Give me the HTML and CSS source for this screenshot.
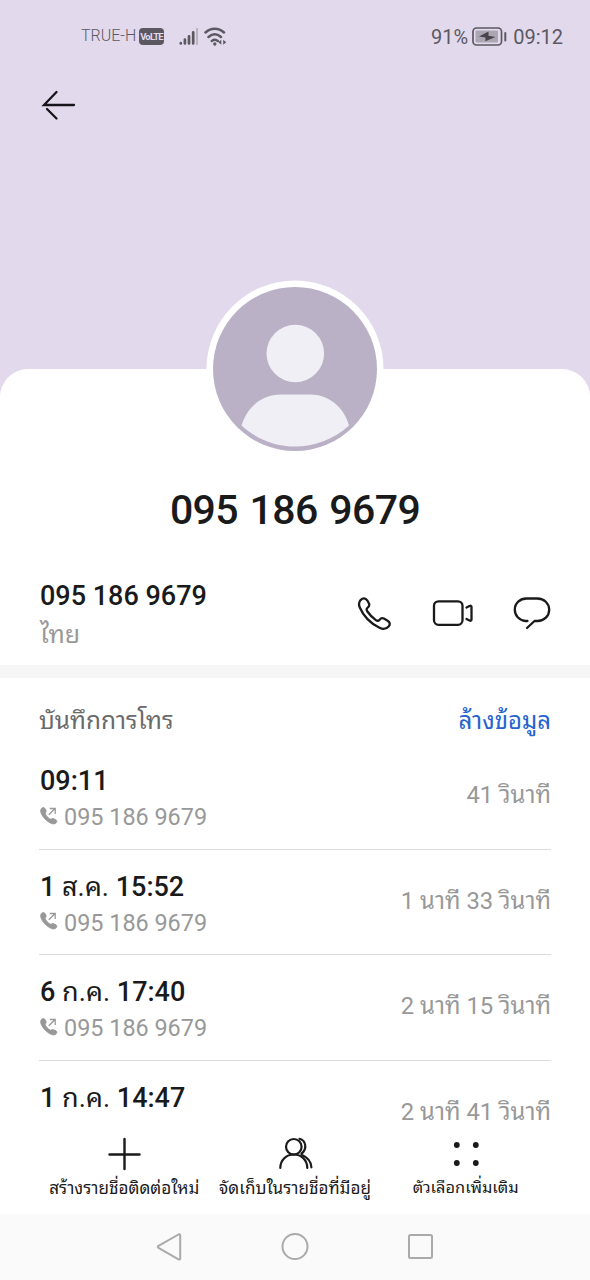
FILE: index.html
```html
<!DOCTYPE html>
<html lang="th">
<head>
<meta charset="utf-8">
<title>095 186 9679</title>
<link rel="stylesheet" href="styles.css">
</head>
<body>
<svg class="defs" width="0" height="0">
  <symbol id="outgoing" viewBox="0 0 18 18">
    <path d="M1.600 1.400C3-.1 4.300.2 5.300 2l.8 1.700c.5 1.200-.9 1.700-.9 2.700.4 2 3.100 4.900 5.300 5.800 1 .2 1.700-1.100 2.800-.6l2.600 1.200c1.300.7 1.200 2.100.1 3.100-1.200 1.100-2.900 1.300-4.500.6C6.600 14.300 2.500 10 1 5.700.5 4 .4 2.500 1.600 1.400z" fill="#989898" stroke="#989898" stroke-width=".9"/>
    <path d="M8.800 7.800 14.800 1.800M9.800 1.500h5.400v5.600" fill="none" stroke="#989898" stroke-width="1.300"/>
  </symbol>
</svg>
<div class="screen">
  <header class="hero">
    <div class="status">
      <div class="status-left">
        <span class="carrier">TRUE-H</span>
        <span class="volte">VoLTE</span>
        <svg class="signal" width="20" height="18" viewBox="0 0 20 18" fill="none" stroke="#5c5862" stroke-width="2.700" stroke-linecap="round">
          <path d="M1.800 15.200v.3M5.900 11.500v4M10 8.300v7.200M14.200 4.300V15.500"/><path d="M18 0v17" stroke="#b9b3c2" stroke-width="2" stroke-linecap="butt"/>
        </svg>
        <svg class="wifi" width="24" height="20" viewBox="0 0 24 20" fill="none" stroke="#5c5862" stroke-width="2.500" stroke-linecap="round">
          <path d="M1.500 5.500c5.500-5 13-5 18.500 0M4.500 10c4-3.500 8.500-3.500 12.500 0M7.800 14c2-1.500 4.200-1.500 6 0"/>
          <circle cx="10.800" cy="17" r="1.700" fill="#5c5862" stroke="none"/>
          <path d="M17.300 12.800v5l-3-2.500zM19.200 12.800v5l3-2.500z" fill="#5c5862" stroke="none"/>
        </svg>
      </div>
      <div class="status-right">
        <span class="battery-text">91%</span>
        <svg class="battery" width="35" height="19" viewBox="0 0 35 19">
          <rect x="1" y="1" width="28.500" height="17" rx="3.500" fill="none" stroke="#5c5862" stroke-width="1.700"/>
          <rect x="3.500" y="3.500" width="22.500" height="12" rx="1" fill="#aca6b3"/>
          <path d="M16.500 4.500 7 9.400l6.500 1-.2 3.800L23.500 10l-7-1.300z" fill="#47444c"/>
          <path d="M33.300 6v7.500" stroke="#5c5862" stroke-width="2" stroke-linecap="round"/>
        </svg>
        <span class="clock">09:12</span>
      </div>
    </div>
    <svg class="back" width="36" height="34" viewBox="0 0 36 34" fill="none" stroke="#15151b" stroke-width="2.300" stroke-linecap="round">
      <path d="M33 17H3L15.500 4M6 21l9.500 9.500"/>
    </svg>
  </header>

  <main class="sheet">
    <svg class="avatar" width="178" height="178" viewBox="0 0 178 178">
      <circle cx="89" cy="89" r="88.500" fill="#fff"/>
      <circle cx="89" cy="89" r="82" fill="#bab1c7"/>
      <circle cx="89.300" cy="73.500" r="28.800" fill="#f0eff5"/>
      <path d="M35.500 145.500C41 127 56 114.500 75 114.500h29c19 0 33.500 12.500 39 31-31 28-77 28-107.500 0z" fill="#f0eff5"/>
    </svg>
    <h1 class="title">095 186 9679</h1>
    <section class="contact">
      <div class="contact-info">
        <div class="number">095 186 9679</div>
        <div class="region">ไทย</div>
      </div>
      <div class="contact-actions">
        <svg width="36" height="36" viewBox="0 0 36 36" fill="none" stroke="#1a1a1a" stroke-width="2.300" stroke-linejoin="round">
          <path d="M3.600 4.100C6 1.500 8.500 1.800 10.200 4.300l1.800 3.200c1 2-.2 3.200-1.700 4.500-1.100 1-.9 2 .1 3.500 2.200 3.200 5.200 6.300 8.500 8.600 1.500 1 2.500 1 3.500-.2 1.300-1.600 2.600-2.300 4.500-1.300l3.700 2.200c2.500 1.600 2.800 3.600 1 5.600-2.500 2.800-5.800 3-9.100 1.400C14 27.600 6.500 20.200 2.800 11.500 1.600 8.700 1.700 6.200 3.600 4.100z"/>
        </svg>
        <svg width="42" height="28" viewBox="0 0 42 28" fill="none" stroke="#1a1a1a" stroke-width="2.300" stroke-linecap="round" stroke-linejoin="round">
          <rect x="2" y="1.300" width="28.500" height="23.500" rx="4.500"/>
          <path d="M34.500 7.500l3-1.500c1.300-.6 2 0 2 1v12.500c0 1-.7 1.600-2 1l-3-1.500"/>
        </svg>
        <svg width="38" height="34" viewBox="0 0 38 34" fill="none" stroke="#1a1a1a" stroke-width="2.300" stroke-linecap="round" stroke-linejoin="round">
          <path d="M14.500 24h-2C6 23.500 1.800 18.500 1.800 12.700 1.800 6.200 7 1.500 13.500 1.500h11c6.500 0 11.700 5 11.700 11.200 0 6.300-5 11.100-11.700 11.300h-3l-7.500 7"/>
        </svg>
      </div>
    </section>
    <div class="band"></div>
    <section class="log">
      <div class="log-head"><span class="log-title">บันทึกการโทร</span><a class="clear">ล้างข้อมูล</a></div>
      <div class="call">
        <div><div class="when">09:11</div><div class="from"><svg width="18" height="18"><use href="#outgoing"/></svg>095 186 9679</div></div>
        <div class="length">41 <span class="th">วินาที</span></div>
      </div>
      <div class="call">
        <div><div class="when">1 <span class="th">ส.ค.</span> 15:52</div><div class="from"><svg width="18" height="18"><use href="#outgoing"/></svg>095 186 9679</div></div>
        <div class="length">1 <span class="th">นาที</span> 33 <span class="th">วินาที</span></div>
      </div>
      <div class="call">
        <div><div class="when">6 <span class="th">ก.ค.</span> 17:40</div><div class="from"><svg width="18" height="18"><use href="#outgoing"/></svg>095 186 9679</div></div>
        <div class="length">2 <span class="th">นาที</span> 15 <span class="th">วินาที</span></div>
      </div>
      <div class="call last">
        <div><div class="when">1 <span class="th">ก.ค.</span> 14:47</div></div>
        <div class="length">2 <span class="th">นาที</span> 41 <span class="th">วินาที</span></div>
      </div>
    </section>
  </main>

  <footer class="toolbar">
    <div class="tool">
      <svg width="36" height="36" viewBox="0 0 36 36" stroke="#1a1a1a" stroke-width="2.400" stroke-linecap="round"><path d="M18.500 3v30M3.500 18.500h30"/></svg>
      <span class="tool-label new">สร้างรายชื่อติดต่อใหม่</span>
    </div>
    <div class="tool">
      <svg width="36" height="36" viewBox="0 0 36 36" fill="none" stroke="#1a1a1a" stroke-width="2.200" stroke-linecap="round">
        <circle cx="16.800" cy="10.800" r="7.800"/><path d="M3.300 32c0-8 6-13.500 13.500-13.500S30.300 24 30.300 32"/>
        <path d="M22.500 2.800c6.500 1.500 8 10.500 2 14.700M24.500 18.800c5.800 2.500 9.600 7 9.900 12.500"/>
      </svg>
      <span class="tool-label save">จัดเก็บในรายชื่อที่มีอยู่</span>
    </div>
    <div class="tool">
      <svg width="36" height="36" viewBox="0 0 36 36" fill="#1a1a1a"><circle cx="8.800" cy="9" r="2.900"/><circle cx="27.800" cy="9" r="2.900"/><circle cx="8.800" cy="27" r="2.900"/><circle cx="27.800" cy="27" r="2.900"/></svg>
      <span class="tool-label more">ตัวเลือกเพิ่มเติม</span>
    </div>
  </footer>
  <nav class="nav">
    <svg width="28" height="30" viewBox="0 0 28 30"><path d="M23.500 2.500 3.500 13.800q-1.500 1 0 2L23.500 27.300q1.700.7 1.700-1V3.500q0-1.700-1.700-1z"/></svg>
    <svg width="28" height="30" viewBox="0 0 28 30"><circle cx="14" cy="14.500" r="12.500"/></svg>
    <svg width="28" height="30" viewBox="0 0 28 30"><rect x="2" y="3" width="23" height="23" rx="1.500"/></svg>
  </nav>
</div>
</body>
</html>
```
FILE: styles.css
```css
* { box-sizing: border-box; }
body { margin: 0; background: #fff; font-family: Roboto, "Noto Sans Thai Looped", Loma, Waree, Garuda, Umpush, "Noto Sans Thai", "Noto Sans", sans-serif; color: #1a1a1a; }
svg { display: block; flex: none; }
.defs { position: absolute; }
.screen { width: 590px; height: 1280px; display: flex; flex-direction: column; overflow: hidden; }
.hero { height: 400px; flex: none; background: #e2daec; }
.status { height: 74px; padding: 0 27px 0 81px; display: flex; justify-content: space-between; align-items: center; color: #5c5862; }
.status-left, .status-right { display: flex; align-items: center; }
.carrier { font-size: 16px; font-weight: 300; line-height: 20px; margin-top: -3px; width: 58px; white-space: nowrap; }
.volte { width: 25px; height: 17px; border-radius: 4px; background: #5c5862; color: #e2daec; font-size: 9.500px; line-height: 17px; font-weight: 700; text-align: center; letter-spacing: -0.8px; margin-top: -1px; margin-right: 15px; white-space: nowrap; }
.signal { margin-top: -1px; margin-right: 5px; }
.wifi { margin-top: -1px; }
.battery-text, .clock { font-size: 20px; white-space: nowrap; }
.battery { margin: -1px 6px 0 4px; }
.back { margin: 14px 0 0 41px; }
.sheet { position: relative; height: 757px; margin-top: -31px; flex: none; background: #fff; border-radius: 28px 28px 0 0; overflow: visible; }
.avatar { position: absolute; left: 206px; top: -89px; }
.title { margin: 0; padding-top: 116px; font-size: 41px; line-height: 50px; font-weight: 500; text-align: center; word-spacing: 2px; letter-spacing: -0.6px; }
.contact { height: 130px; padding: 44px 39px 0; display: flex; justify-content: space-between; }
.number { font-size: 27px; line-height: 34px; font-weight: 500; padding-left: 1px; }
.region { font-size: 25px; line-height: 32px; margin-top: 6px; padding-left: 1px; color: #989898; }
.contact-actions { display: flex; align-items: center; gap: 39px; height: 70px; }
.band { height: 13px; background: #f6f6f6; }
.log { padding: 0 39px; }
.log-head { height: 66px; padding-top: 27px; display: flex; justify-content: space-between; font-size: 24.400px; line-height: 32px; color: #6a6a6a; }
.clear { color: #2563cf; font-size: 24px; }
.call { height: 105.600px; padding-top: 20px; display: flex; justify-content: space-between; border-bottom: 1px solid #dcdcdc; }
.last { border: 0; }
.when { font-size: 27px; line-height: 34px; font-weight: 500; white-space: nowrap; padding-left: 1px; }
.when .th { font-weight: 400; }
.from { display: flex; align-items: center; gap: 6px; font-size: 23.400px; line-height: 32px; margin-top: 3px; padding-left: 1px; color: #989898; }
.from svg { margin-top: -3px; }
.length { font-size: 23.800px; line-height: 32px; margin-top: 15px; color: #989898; white-space: nowrap; }
.toolbar { height: 88px; flex: none; padding: 10px 39px 0; display: grid; grid-template-columns: repeat(3, 1fr); background: #fff; }
.tool { display: flex; flex-direction: column; align-items: center; white-space: nowrap; }
.tool-label { font-size: 17.100px; line-height: 26px; margin-top: 3px; }
.more { font-size: 16.400px; }
.nav { height: 66px; flex: none; background: #fafafa; display: flex; justify-content: center; gap: 98px; align-items: center; }
.nav svg { fill: none; stroke: #aaa; stroke-width: 2; }
```
